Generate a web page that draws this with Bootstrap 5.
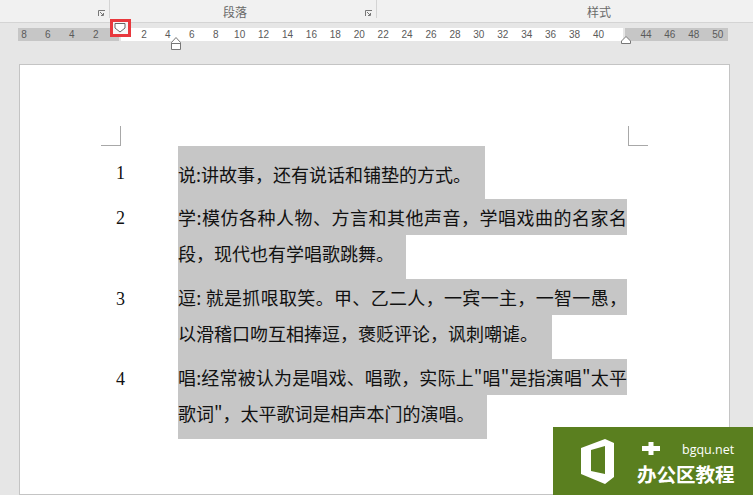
<!DOCTYPE html>
<html lang="zh-CN">
<head>
    <meta charset="UTF-8">
    <title>段落标尺</title>
    <link href="https://cdn.jsdelivr.net/npm/bootstrap@5.3.0/dist/css/bootstrap.min.css" rel="stylesheet">
    <style>
        html, body { width: 753px; height: 495px; overflow: hidden; }
        body { background: #e6e6e6; font-family: "Noto Sans CJK SC", sans-serif; position: relative; }
        .ribbon { height: 23px; background: #f1f1f1; border-bottom: 1px solid #d4d4d4; font-size: 12px; color: #6a6a6a; }
        .rgroup { position: relative; height: 18px; line-height: 24px; text-align: center; border-right: 1px solid #d4d4d4; }
        .rg-font { width: 110px; }
        .rg-para { width: 267px; padding-right: 16px; }
        .rg-style { padding-left: 68px; border-right: 0; }
        .launcher { position: absolute; right: 3px; top: 10px; }
        .ruler { height: 13px; margin: 5px 0 0 18px; font: 10px/14px "Liberation Sans", sans-serif; color: #5a5a5a; }
        .rseg { height: 13px; background: #c6c6c6; display: flex; flex: none; }
        .rseg span { width: 23.93px; flex: none; text-align: center; }
        .rseg-left { width: 101px; }
        .rseg-left span:first-child { margin-left: -6px; }
        .rseg-mid { width: 502px; margin: 0 2px; padding-left: 11px; background: #fff; }
        .rseg-right { width: 103px; padding-left: 9px; }
        .marker { position: absolute; }
        .redbox { position: absolute; left: 110px; top: 19px; width: 21px; height: 18px; border: 3px solid #e8383d; background: #f6f6f6; }
        .mk-indent { left: 170px; top: 35px; }
        .mk-right { left: 620px; top: 35px; }
        .sheet { width: 711px; height: 431px; margin: 23px 0 0 19px; background: #fff; border: 1px solid #c4c4c4; padding: 81px 0 0 43px; position: relative; }
        .crop { position: absolute; width: 20px; height: 20px; top: 61px; border-bottom: 1px solid #a8a8a8; }
        .crop-l { left: 81px; border-right: 1px solid #a8a8a8; }
        .crop-r { left: 608px; border-left: 1px solid #a8a8a8; }
        .numcol { width: 115px; flex: none; text-align: center; font: 18px/36px "Liberation Serif", serif; color: #111; }
        .num-a { padding-top: 9px; }
        .num-b { padding-top: 1px; }
        .num-c { padding-top: 2px; }
        .para { font-size: 18px; line-height: 36px; color: #111; width: 449px; }
        .tline { background: #c6c6c6; height: 36px; white-space: nowrap; }
        .tfull { width: 449px; text-align: justify; text-align-last: justify; }
        .tend { width: fit-content; padding-right: 12px; }
        .tend-wide { padding-right: 14px; }
        .gap-after { height: 44px; }
        .gap-first { height: 53px; padding-top: 10px; }
        .logo { position: absolute; left: 553px; top: 427px; width: 200px; height: 68px; background: #5a7f1f; color: #fff; }
        .logo-mark { left: 28px; top: 12px; }
        .logo-plus { left: 89px; top: 15px; }
        .logo-url { position: absolute; left: 129px; top: 16px; font: 12.5px/14px "Open Sans", sans-serif; }
        .logo-name { position: absolute; left: 84px; top: 35px; font-size: 19.5px; line-height: 24px; font-weight: 700; }
    </style>
</head>
<body>
    <div class="ribbon d-flex">
        <div class="rgroup rg-font"><svg class="launcher" width="8" height="8" viewBox="0 0 8 8"><path d="M.5 6V.5H7M2 2l3 3M5.500 3v2.500H3" fill="none" stroke="#777"/></svg></div>
        <div class="rgroup rg-para">段落<svg class="launcher" width="8" height="8" viewBox="0 0 8 8"><path d="M.5 6V.5H7M2 2l3 3M5.500 3v2.500H3" fill="none" stroke="#777"/></svg></div>
        <div class="rgroup rg-style flex-grow-1">样式</div>
    </div>

    <div class="ruler d-flex" id="ruler"></div>

    <div class="redbox"><svg class="d-block" width="15" height="12" viewBox="0 0 15 12"><path d="M2 1.500h10v4.500l-5 4-5-4z" fill="#fff" stroke="#666"/></svg></div>
    <svg class="marker mk-indent" width="12" height="16" viewBox="0 0 12 16"><path d="M1.500 7.500 6 2.500l4.500 5v7h-9zM1.500 8.500h9" fill="#fff" stroke="#777"/></svg>
    <svg class="marker mk-right" width="12" height="10" viewBox="0 0 12 10"><path d="M1.500 8.500V6L6 1.500 10.500 6v2.500z" fill="#fff" stroke="#777"/></svg>

    <div class="sheet">
        <div class="crop crop-l"></div>
        <div class="crop crop-r"></div>

        <div class="d-flex">
            <div class="numcol num-a">1</div>
            <div class="para">
                <div class="tline tend tend-wide gap-first">说:讲故事，还有说话和铺垫的方式。</div>
            </div>
        </div>
        <div class="d-flex">
            <div class="numcol num-b">2</div>
            <div class="para">
                <div class="tline tfull">学:模仿各种人物、方言和其他声音，学唱戏曲的名家名</div>
                <div class="tline tend gap-after">段，现代也有学唱歌跳舞。</div>
            </div>
        </div>
        <div class="d-flex">
            <div class="numcol num-c">3</div>
            <div class="para">
                <div class="tline tfull">逗: 就是抓哏取笑。甲、乙二人，一宾一主，一智一愚，</div>
                <div class="tline tend tend-wide gap-after">以滑稽口吻互相捧逗，褒贬评论，讽刺嘲谑。</div>
            </div>
        </div>
        <div class="d-flex">
            <div class="numcol num-c">4</div>
            <div class="para">
                <div class="tline tfull">唱:经常被认为是唱戏、唱歌，实际上"唱"是指演唱"太平</div>
                <div class="tline tend gap-after">歌词"，太平歌词是相声本门的演唱。</div>
            </div>
        </div>
    </div>

    <div class="logo">
        <svg class="marker logo-mark" width="33" height="45" viewBox="0 0 33 45"><path d="M0 9 24 0l9 4v34l-9 7L0 35zM10 11v21l14 3V7z" fill="#fff" fill-rule="evenodd"/></svg>
        <svg class="marker logo-plus" width="18" height="13" viewBox="0 0 18 13"><path d="M6.500 0h5v4H18v5h-6.500v4h-5V9H0V4h6.500z" fill="#fff"/></svg>
        <div class="logo-url">bgqu.net</div>
        <div class="logo-name">办公区教程</div>
    </div>

    <script>
        // ruler numbers: left margin, text area, right margin
        const segs = [
            { cls: "rseg-left", nums: [8, 6, 4, 2] },
            { cls: "rseg-mid", nums: [] },
            { cls: "rseg-right", nums: [44, 46, 48, 50] }
        ];
        for (let n = 2; n <= 40; n += 2) segs[1].nums.push(n);
        const ruler = document.getElementById("ruler");
        segs.forEach(s => {
            const d = document.createElement("div");
            d.className = "rseg " + s.cls;
            d.innerHTML = s.nums.map(n => `<span>${n}</span>`).join("");
            ruler.appendChild(d);
        });
    </script>
    <script src="https://cdn.jsdelivr.net/npm/bootstrap@5.3.0/dist/js/bootstrap.bundle.min.js"></script>
</body>
</html>
